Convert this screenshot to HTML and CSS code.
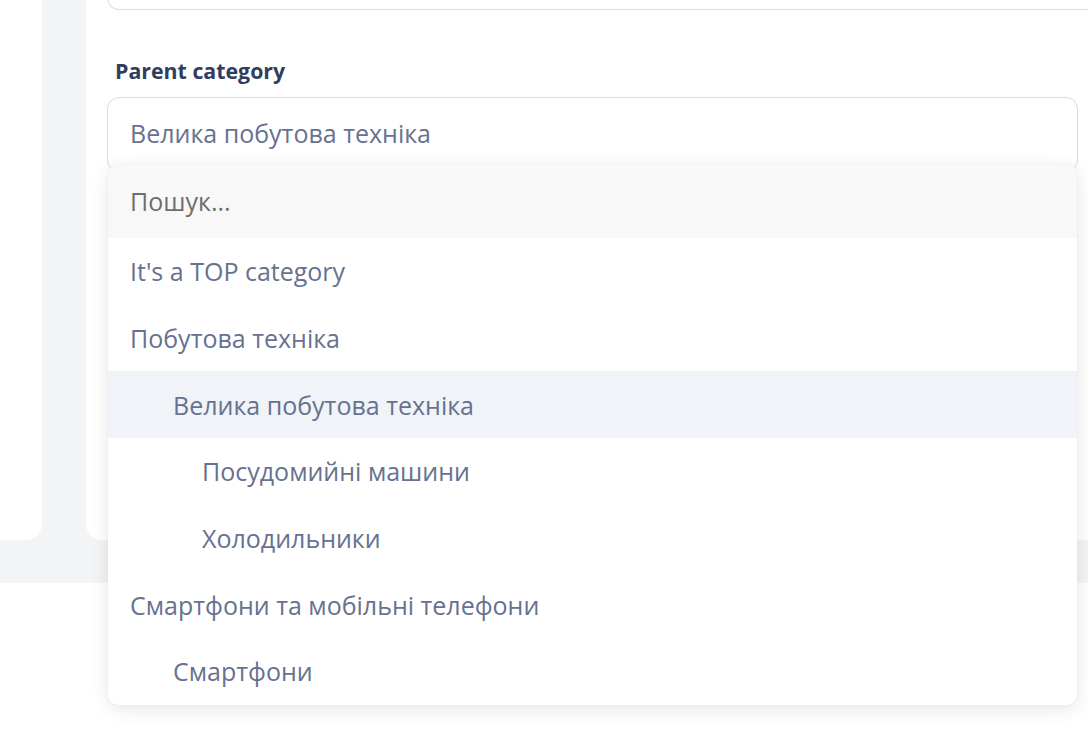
FILE: index.html
```html
<!DOCTYPE html>
<html lang="uk">
<head>
<meta charset="utf-8">
<title>Parent category</title>
<link rel="stylesheet" href="styles.css">
</head>
<body>
<div class="page">
  <aside class="side-card"></aside>
  <main class="main-card">
    <div class="field-top"></div>
    <div class="field">
      <label class="field-label">Parent category</label>
      <div class="select-wrap">
        <div class="select">Велика побутова техніка</div>
        <div class="dropdown">
          <div class="search">Пошук...</div>
          <ul class="options">
            <li class="opt">It's a TOP category</li>
            <li class="opt">Побутова техніка</li>
            <li class="opt lvl1 active">Велика побутова техніка</li>
            <li class="opt lvl2">Посудомийні машини</li>
            <li class="opt lvl2">Холодильники</li>
            <li class="opt">Смартфони та мобільні телефони</li>
            <li class="opt lvl1">Смартфони</li>
          </ul>
        </div>
      </div>
    </div>
  </main>
</div>
<div class="below"></div>
</body>
</html>
```
FILE: styles.css
```css
html, body {
  margin: 0;
  padding: 0;
  background: #ffffff;
  font-family: "Open Sans", "Noto Sans", sans-serif;
}

body {
  min-height: 738px;
}

.page {
  display: flex;
  gap: 44px;
  height: 583px;
  background: #f3f4f6;
  position: relative;
  z-index: 1;
}

.below {
  height: 155px;
  background: #ffffff;
}

.side-card {
  flex: 0 0 42px;
  height: 540px;
  background: #ffffff;
  border-bottom-right-radius: 16px;
}

.main-card {
  flex: 1;
  height: 540px;
  background: #ffffff;
  border-bottom-left-radius: 16px;
  padding-left: 21px;
  box-sizing: border-box;
}

.field-top {
  margin-top: -60px;
  height: 70px;
  box-sizing: border-box;
  border: 1px solid #dcdcdc;
  border-right: none;
  border-radius: 12px 0 0 12px;
}

.field {
  margin-top: 46px;
  width: 971px;
}

.field-label {
  display: block;
  padding-left: 8px;
  font-size: 21.33px;
  line-height: 29px;
  font-weight: 700;
  color: #313d5e;
}

.select-wrap {
  position: relative;
  margin-top: 12px;
}

.select {
  height: 75px;
  box-sizing: border-box;
  border: 1px solid #dadada;
  border-radius: 12px;
  padding: 0 22px 3px;
  display: flex;
  align-items: center;
  font-size: 25px;
  color: #66728f;
}

.dropdown {
  position: absolute;
  top: 67px;
  left: 1px;
  right: 1px;
  z-index: 10;
  background: #ffffff;
  border-radius: 10px;
  box-shadow: 0 4px 18px rgba(0, 0, 0, 0.10), 0 0 2px rgba(0, 0, 0, 0.06);
  overflow: hidden;
}

.search {
  height: 74px;
  background: #f8f8f8;
  display: flex;
  align-items: center;
  padding: 0 22px;
  font-size: 25px;
  color: #6e6e6e;
}

.options {
  list-style: none;
  margin: 0;
  padding: 0;
}

.opt {
  height: 66.7px;
  display: flex;
  align-items: center;
  padding-left: 22px;
  font-size: 25px;
  color: #66728f;
}

.opt.lvl1 { padding-left: 65px; }
.opt.lvl2 { padding-left: 94px; }

.opt.active { background: #f0f3f8; }
```
